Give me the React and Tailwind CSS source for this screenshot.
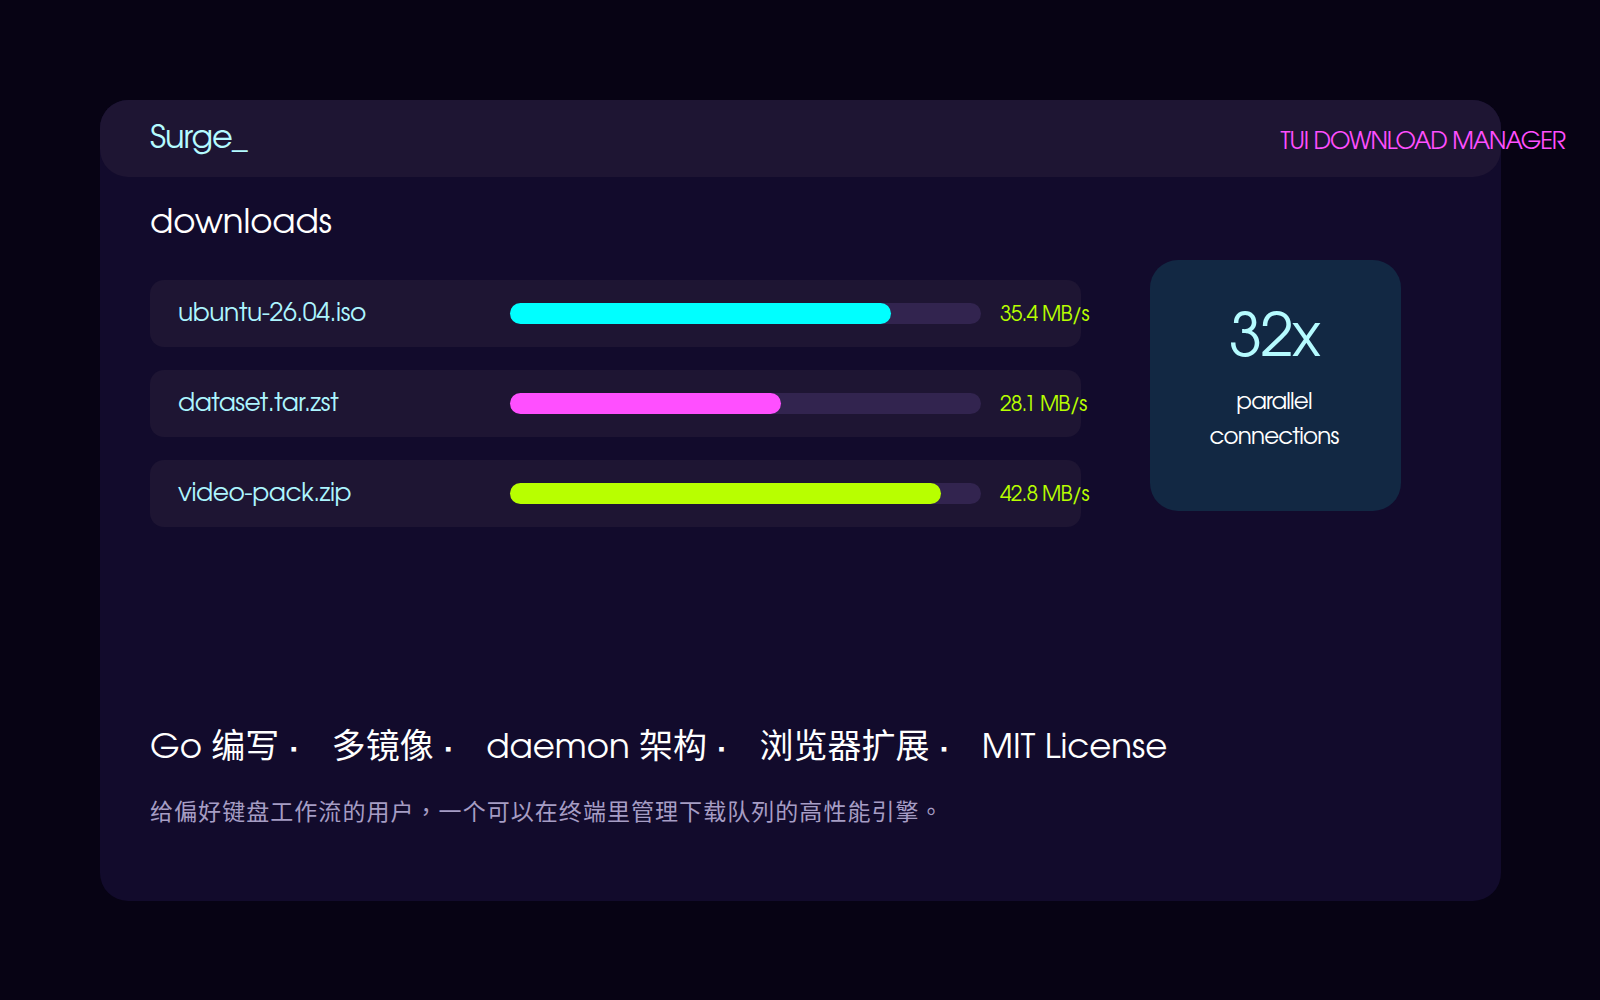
const rows=[
 {name:"ubuntu-26.04.iso",speed:"35.4 MB/s",fill:"w-[80.8%] bg-[#00ffff]"},
 {name:"dataset.tar.zst",speed:"28.1 MB/s",fill:"w-[57.5%] bg-[#ff4fff]"},
 {name:"video-pack.zip",speed:"42.8 MB/s",fill:"w-[91.5%] bg-[#b8ff00]"},
];
const tags=["Go 编写","多镜像","daemon 架构","浏览器扩展"];
export default function App(){return (
<div className="h-[1000px] w-[1600px] overflow-hidden bg-[#070314] p-[100px] [font-family:'TeX_Gyre_Adventor','Noto_Sans_CJK_TC',sans-serif]">
 <div className="flex h-[801px] w-[1401px] flex-col rounded-[28px] bg-[#120b2c]">
  <header className="flex h-[77px] shrink-0 items-center justify-between rounded-[28px] bg-[#1e1533] px-[50px]">
   <span className="text-[32px] tracking-[-1px] text-[#b5fbff]">Surge_</span>
   <span className="-mr-[114px] mt-[11px] text-[23.5px] tracking-[-1.05px] text-[#ff4fff]">TUI DOWNLOAD MANAGER</span>
  </header>
  <div className="flex flex-1 flex-col px-[50px]">
   <h2 className="mt-[20px] text-[34px] leading-[54px] tracking-[-0.1px] text-white">downloads</h2>
   <div className="mt-[29px] flex items-start gap-[69px]">
    <div className="flex w-[931px] shrink-0 flex-col gap-[23px]">
     {rows.map(r=>(
      <div key={r.name} className="flex h-[67px] items-center rounded-[14px] bg-[#1e1533] pl-[28px]">
       <span className="mt-[3px] w-[332px] shrink-0 text-[25px] tracking-[-0.45px] text-[#adf5ff]">{r.name}</span>
       <div className="h-[21px] w-[471px] shrink-0 rounded-full bg-[#32244f]"><div className={`h-full rounded-full ${r.fill}`}/></div>
       <span className="ml-[19px] mt-[5px] shrink-0 whitespace-nowrap text-[21px] tracking-[-0.9px] text-[#b8ff00]">{r.speed}</span>
      </div>
     ))}
    </div>
    <div className="-mt-[20px] flex h-[251px] w-[251px] shrink-0 flex-col items-center rounded-[28px] bg-[#122843] pr-[3px] pt-[42px]">
     <div className="text-[60px] leading-[76px] tracking-[-1.8px] text-[#b5fbff]">32x</div>
     <div className="mt-[7px] text-center text-[23px] leading-[35px] tracking-[-0.85px] text-white">parallel<br/>connections</div>
    </div>
   </div>
   <div className="mt-[198px] flex gap-[33px] text-[34px] leading-[48px] text-white">
    {tags.map(t=><span key={t}>{t} <span className="font-bold">·</span></span>)}<span>MIT License</span>
   </div>
   <p className="mt-[24px] text-[23px] tracking-[1.05px] text-[#a69dc4]">给偏好键盘工作流的用户，一个可以在终端里管理下载队列的高性能引擎。</p>
  </div>
 </div>
</div>)}
